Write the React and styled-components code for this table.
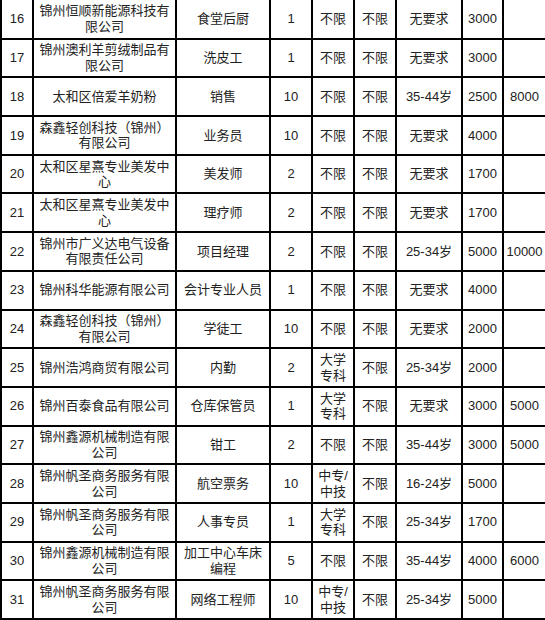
import styled, { createGlobalStyle } from "styled-components";

const GlobalStyle = createGlobalStyle`
  html, body {
    margin: 0;
    padding: 0;
    background: #fff;
    overflow: hidden;
  }
`;

const rows = [
  ["16", "锦州恒顺新能源科技有限公司", "食堂后厨", "1", "不限", "不限", "无要求", "3000", ""],
  ["17", "锦州澳利羊剪绒制品有限公司", "洗皮工", "1", "不限", "不限", "无要求", "3000", ""],
  ["18", "太和区倍爱羊奶粉", "销售", "10", "不限", "不限", "35-44岁", "2500", "8000"],
  ["19", "森鑫轻创科技（锦州）有限公司", "业务员", "10", "不限", "不限", "无要求", "4000", ""],
  ["20", "太和区星熹专业美发中心", "美发师", "2", "不限", "不限", "无要求", "1700", ""],
  ["21", "太和区星熹专业美发中心", "理疗师", "2", "不限", "不限", "无要求", "1700", ""],
  ["22", "锦州市广义达电气设备有限责任公司", "项目经理", "2", "不限", "不限", "25-34岁", "5000", "10000"],
  ["23", "锦州科华能源有限公司", "会计专业人员", "1", "不限", "不限", "无要求", "4000", ""],
  ["24", "森鑫轻创科技（锦州）有限公司", "学徒工", "10", "不限", "不限", "无要求", "2000", ""],
  ["25", "锦州浩鸿商贸有限公司", "内勤", "2", "大学专科", "不限", "25-34岁", "2000", ""],
  ["26", "锦州百泰食品有限公司", "仓库保管员", "1", "大学专科", "不限", "无要求", "3000", "5000"],
  ["27", "锦州鑫源机械制造有限公司", "钳工", "2", "不限", "不限", "35-44岁", "3000", "5000"],
  ["28", "锦州帆圣商务服务有限公司", "航空票务", "10", "中专/中技", "不限", "16-24岁", "5000", ""],
  ["29", "锦州帆圣商务服务有限公司", "人事专员", "1", "大学专科", "不限", "25-34岁", "1700", ""],
  ["30", "锦州鑫源机械制造有限公司", "加工中心车床编程", "5", "不限", "不限", "35-44岁", "4000", "6000"],
  ["31", "锦州帆圣商务服务有限公司", "网络工程师", "10", "中专/中技", "不限", "25-34岁", "5000", ""],
];

const Page = styled.div`
  width: 545px;
  height: 620px;
  overflow: hidden;
`;

const Table = styled.div`
  display: flex;
  flex-direction: column;
  width: 545px;
  border-left: 2px solid #000;
  font-family: "Liberation Sans", "Noto Sans CJK SC", sans-serif;
  font-size: 13px;
  line-height: 15.6px;
  color: #222;
`;

const Row = styled.div`
  display: grid;
  grid-template-columns: 32px 143px 94px 42px 42px 42px 66px 41px 43px;
  height: ${({ $first }) => ($first ? "39.7px" : "38.69px")};
  flex-shrink: 0;
`;

const Cell = styled.div`
  box-sizing: border-box;
  border-right: 2px solid #000;
  border-bottom: 2px solid #000;
  display: flex;
  align-items: center;
  justify-content: center;
  text-align: center;
  padding: 0 ${({ $pad }) => $pad || 2}px;
  overflow: hidden;
`;

const pads = [1, 3, 3, 1, 3, 1, 1, 1, 0];

export default function App() {
  return (
    <Page>
      <GlobalStyle />
      <Table>
        {rows.map((r, i) => (
          <Row key={r[0]} $first={i === 0}>
            {r.map((v, j) => (
              <Cell key={j} $pad={pads[j]}>
                {v}
              </Cell>
            ))}
          </Row>
        ))}
      </Table>
    </Page>
  );
}
